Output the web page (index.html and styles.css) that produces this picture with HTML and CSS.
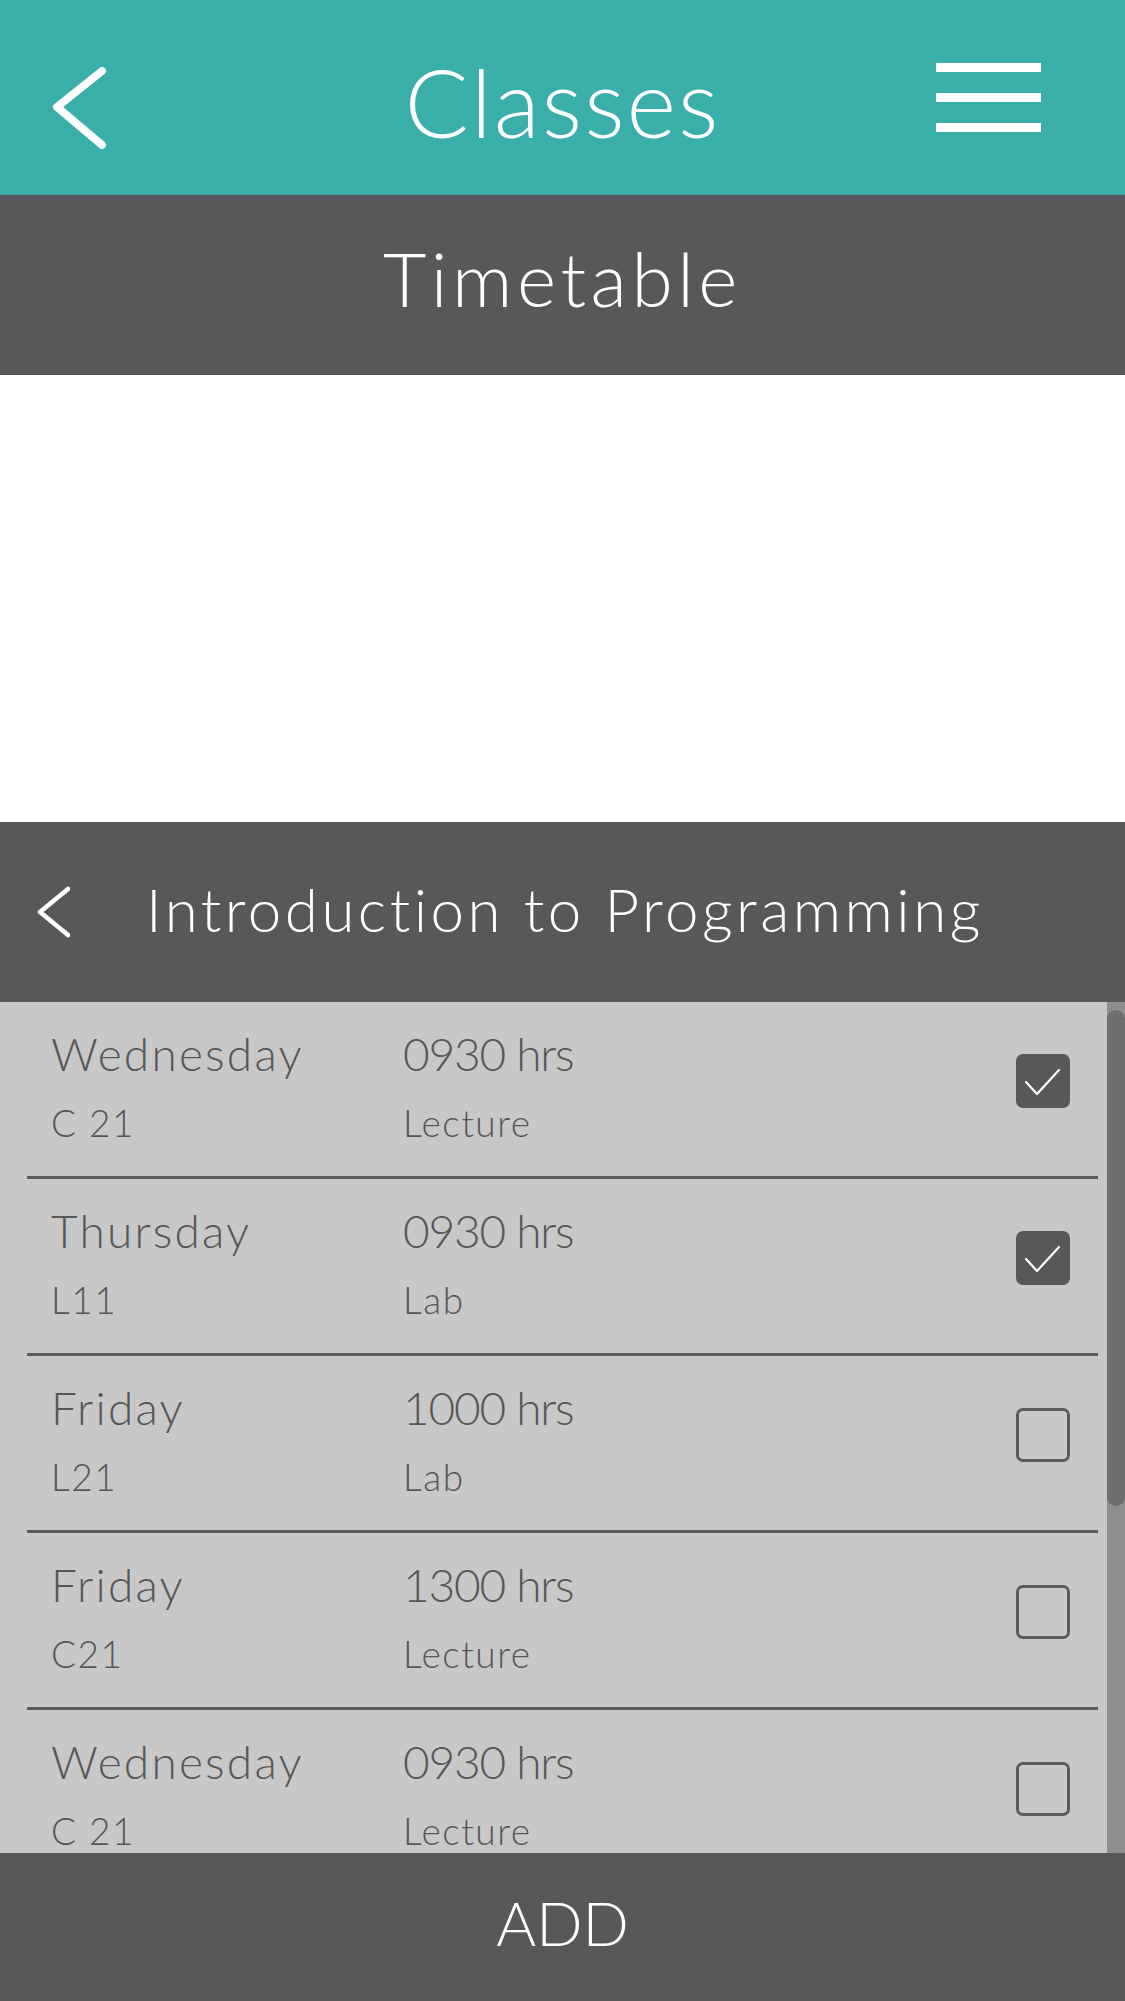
FILE: index.html
```html
<!DOCTYPE html>
<html lang="en">
<head>
<meta charset="utf-8">
<title>Classes</title>
<link rel="stylesheet" href="styles.css">
</head>
<body>
<div class="app">
  <header class="topbar">
    <svg class="back-icon" width="80" height="100" viewBox="0 0 80 100" aria-hidden="true">
      <path d="M62 13 L17 49 L62 87" fill="none" stroke="#fff" stroke-width="8" stroke-linecap="round" stroke-linejoin="round"/>
    </svg>
    <h1 class="title">Classes</h1>
    <div class="hamburger"><span></span><span></span><span></span></div>
  </header>

  <div class="subbar">Timetable</div>

  <div class="blank"></div>

  <div class="coursebar">
    <svg class="course-back" width="40" height="60" viewBox="0 0 40 60" aria-hidden="true">
      <path d="M38 7 L10 30 L38 53" fill="none" stroke="#fff" stroke-width="4.5" stroke-linecap="round" stroke-linejoin="round"/>
    </svg>
    <span class="course-title">Introduction to Programming</span>
  </div>

  <div class="listwrap">
    <div class="list">
      <div class="row">
        <div class="col col-day"><div class="main">Wednesday</div><div class="sub">C 21</div></div>
        <div class="col col-time"><div class="main time">0930 hrs</div><div class="sub">Lecture</div></div>
        <div class="check checked"><svg width="54" height="54" viewBox="0 0 54 54"><path d="M10 28 L21 40 L43 16" fill="none" stroke="#fff" stroke-width="2.2" stroke-linecap="round" stroke-linejoin="round"/></svg></div>
      </div>
      <div class="row">
        <div class="col col-day"><div class="main">Thursday</div><div class="sub">L11</div></div>
        <div class="col col-time"><div class="main time">0930 hrs</div><div class="sub">Lab</div></div>
        <div class="check checked"><svg width="54" height="54" viewBox="0 0 54 54"><path d="M10 28 L21 40 L43 16" fill="none" stroke="#fff" stroke-width="2.2" stroke-linecap="round" stroke-linejoin="round"/></svg></div>
      </div>
      <div class="row">
        <div class="col col-day"><div class="main">Friday</div><div class="sub">L21</div></div>
        <div class="col col-time"><div class="main time">1000 hrs</div><div class="sub">Lab</div></div>
        <div class="check"></div>
      </div>
      <div class="row">
        <div class="col col-day"><div class="main">Friday</div><div class="sub">C21</div></div>
        <div class="col col-time"><div class="main time">1300 hrs</div><div class="sub">Lecture</div></div>
        <div class="check"></div>
      </div>
      <div class="row">
        <div class="col col-day"><div class="main">Wednesday</div><div class="sub">C 21</div></div>
        <div class="col col-time"><div class="main time">0930 hrs</div><div class="sub">Lecture</div></div>
        <div class="check"></div>
      </div>
    </div>
    <div class="scrolltrack"><div class="thumb"></div></div>
  </div>

  <div class="addbar">ADD</div>
</div>
</body>
</html>
```

FILE: styles.css
```css
* { box-sizing: border-box; }
html, body { margin: 0; padding: 0; }
body {
  font-family: "Lato", "Open Sans", "DejaVu Sans", sans-serif;
  font-weight: 300;
  font-variant-ligatures: none;
  background: #ffffff;
}
.app {
  width: 1125px;
  height: 2001px;
  display: flex;
  flex-direction: column;
  overflow: hidden;
}

/* top teal bar */
.topbar {
  height: 195px;
  flex: 0 0 195px;
  background: #3aaea8;
  display: grid;
  grid-template-columns: 1fr auto 1fr;
  align-items: center;
  padding: 0 40px;
}
.back-icon {
  justify-self: start;
  align-self: start;
  margin-top: 58px;
  display: block;
}
.title {
  margin: 0;
  padding-top: 6px;
  font-size: 95px;
  font-weight: 300;
  letter-spacing: 2px;
  color: #ffffff;
  line-height: 1.2;
}
.hamburger {
  justify-self: end;
  margin-right: 44px;
  display: flex;
  flex-direction: column;
  gap: 21px;
}
.hamburger span {
  display: block;
  width: 105px;
  height: 9px;
  background: #ffffff;
}

/* timetable bar */
.subbar {
  flex: 0 0 180px;
  height: 180px;
  background: #58585a;
  color: #ffffff;
  font-size: 75px;
  letter-spacing: 4.5px;
  line-height: 1.2;
  display: flex;
  align-items: center;
  justify-content: center;
  padding-bottom: 14px;
}

.blank {
  flex: 0 0 447px;
  background: #ffffff;
}

/* course bar */
.coursebar {
  flex: 0 0 180px;
  height: 180px;
  background: #58585a;
  color: #ffffff;
  display: flex;
  align-items: center;
  padding-left: 30px;
}
.course-back { display: block; flex: 0 0 auto; }
.course-title {
  font-size: 60px;
  letter-spacing: 3.5px;
  line-height: 1.2;
  margin-left: 76px;
  padding-bottom: 6px;
}

/* list */
.listwrap {
  flex: 0 0 851px;
  height: 851px;
  background: #c8c8c8;
  display: flex;
  overflow: hidden;
}
.list {
  flex: 1 1 auto;
  display: flex;
  flex-direction: column;
}
.row {
  flex: 0 0 177px;
  height: 177px;
  margin: 0 9px 0 27px;
  border-bottom: 3px solid #5b5b5b;
  display: flex;
  align-items: flex-start;
  padding-left: 24px;
  color: #575757;
}
.col {
  display: flex;
  flex-direction: column;
  padding-top: 24px;
}
.col-day { width: 352px; }
.col-time { flex: 1 1 auto; }
.main {
  font-size: 46px;
  line-height: 56px;
  letter-spacing: 2.2px;
}
.main.time { letter-spacing: -1.2px; }
.sub {
  font-size: 37px;
  line-height: 44px;
  letter-spacing: 1.5px;
  margin-top: 19px;
}
.check {
  flex: 0 0 54px;
  width: 54px;
  height: 54px;
  margin-top: 52px;
  margin-right: 28px;
  border: 3px solid #5b5b5b;
  border-radius: 7px;
}
.check svg { display: block; margin: -3px; }
.check.checked {
  background: #58585a;
  border-color: #58585a;
}

.scrolltrack {
  flex: 0 0 18px;
  width: 18px;
  background: #8e8e8e;
  padding-top: 8px;
}
.thumb {
  width: 18px;
  height: 496px;
  background: #6e6e6e;
  border-radius: 9px;
}

/* add bar */
.addbar {
  flex: 0 0 148px;
  height: 148px;
  background: #58585a;
  color: #ffffff;
  font-size: 61px;
  line-height: 1.2;
  display: flex;
  align-items: center;
  justify-content: center;
  padding-bottom: 9px;
}
```
